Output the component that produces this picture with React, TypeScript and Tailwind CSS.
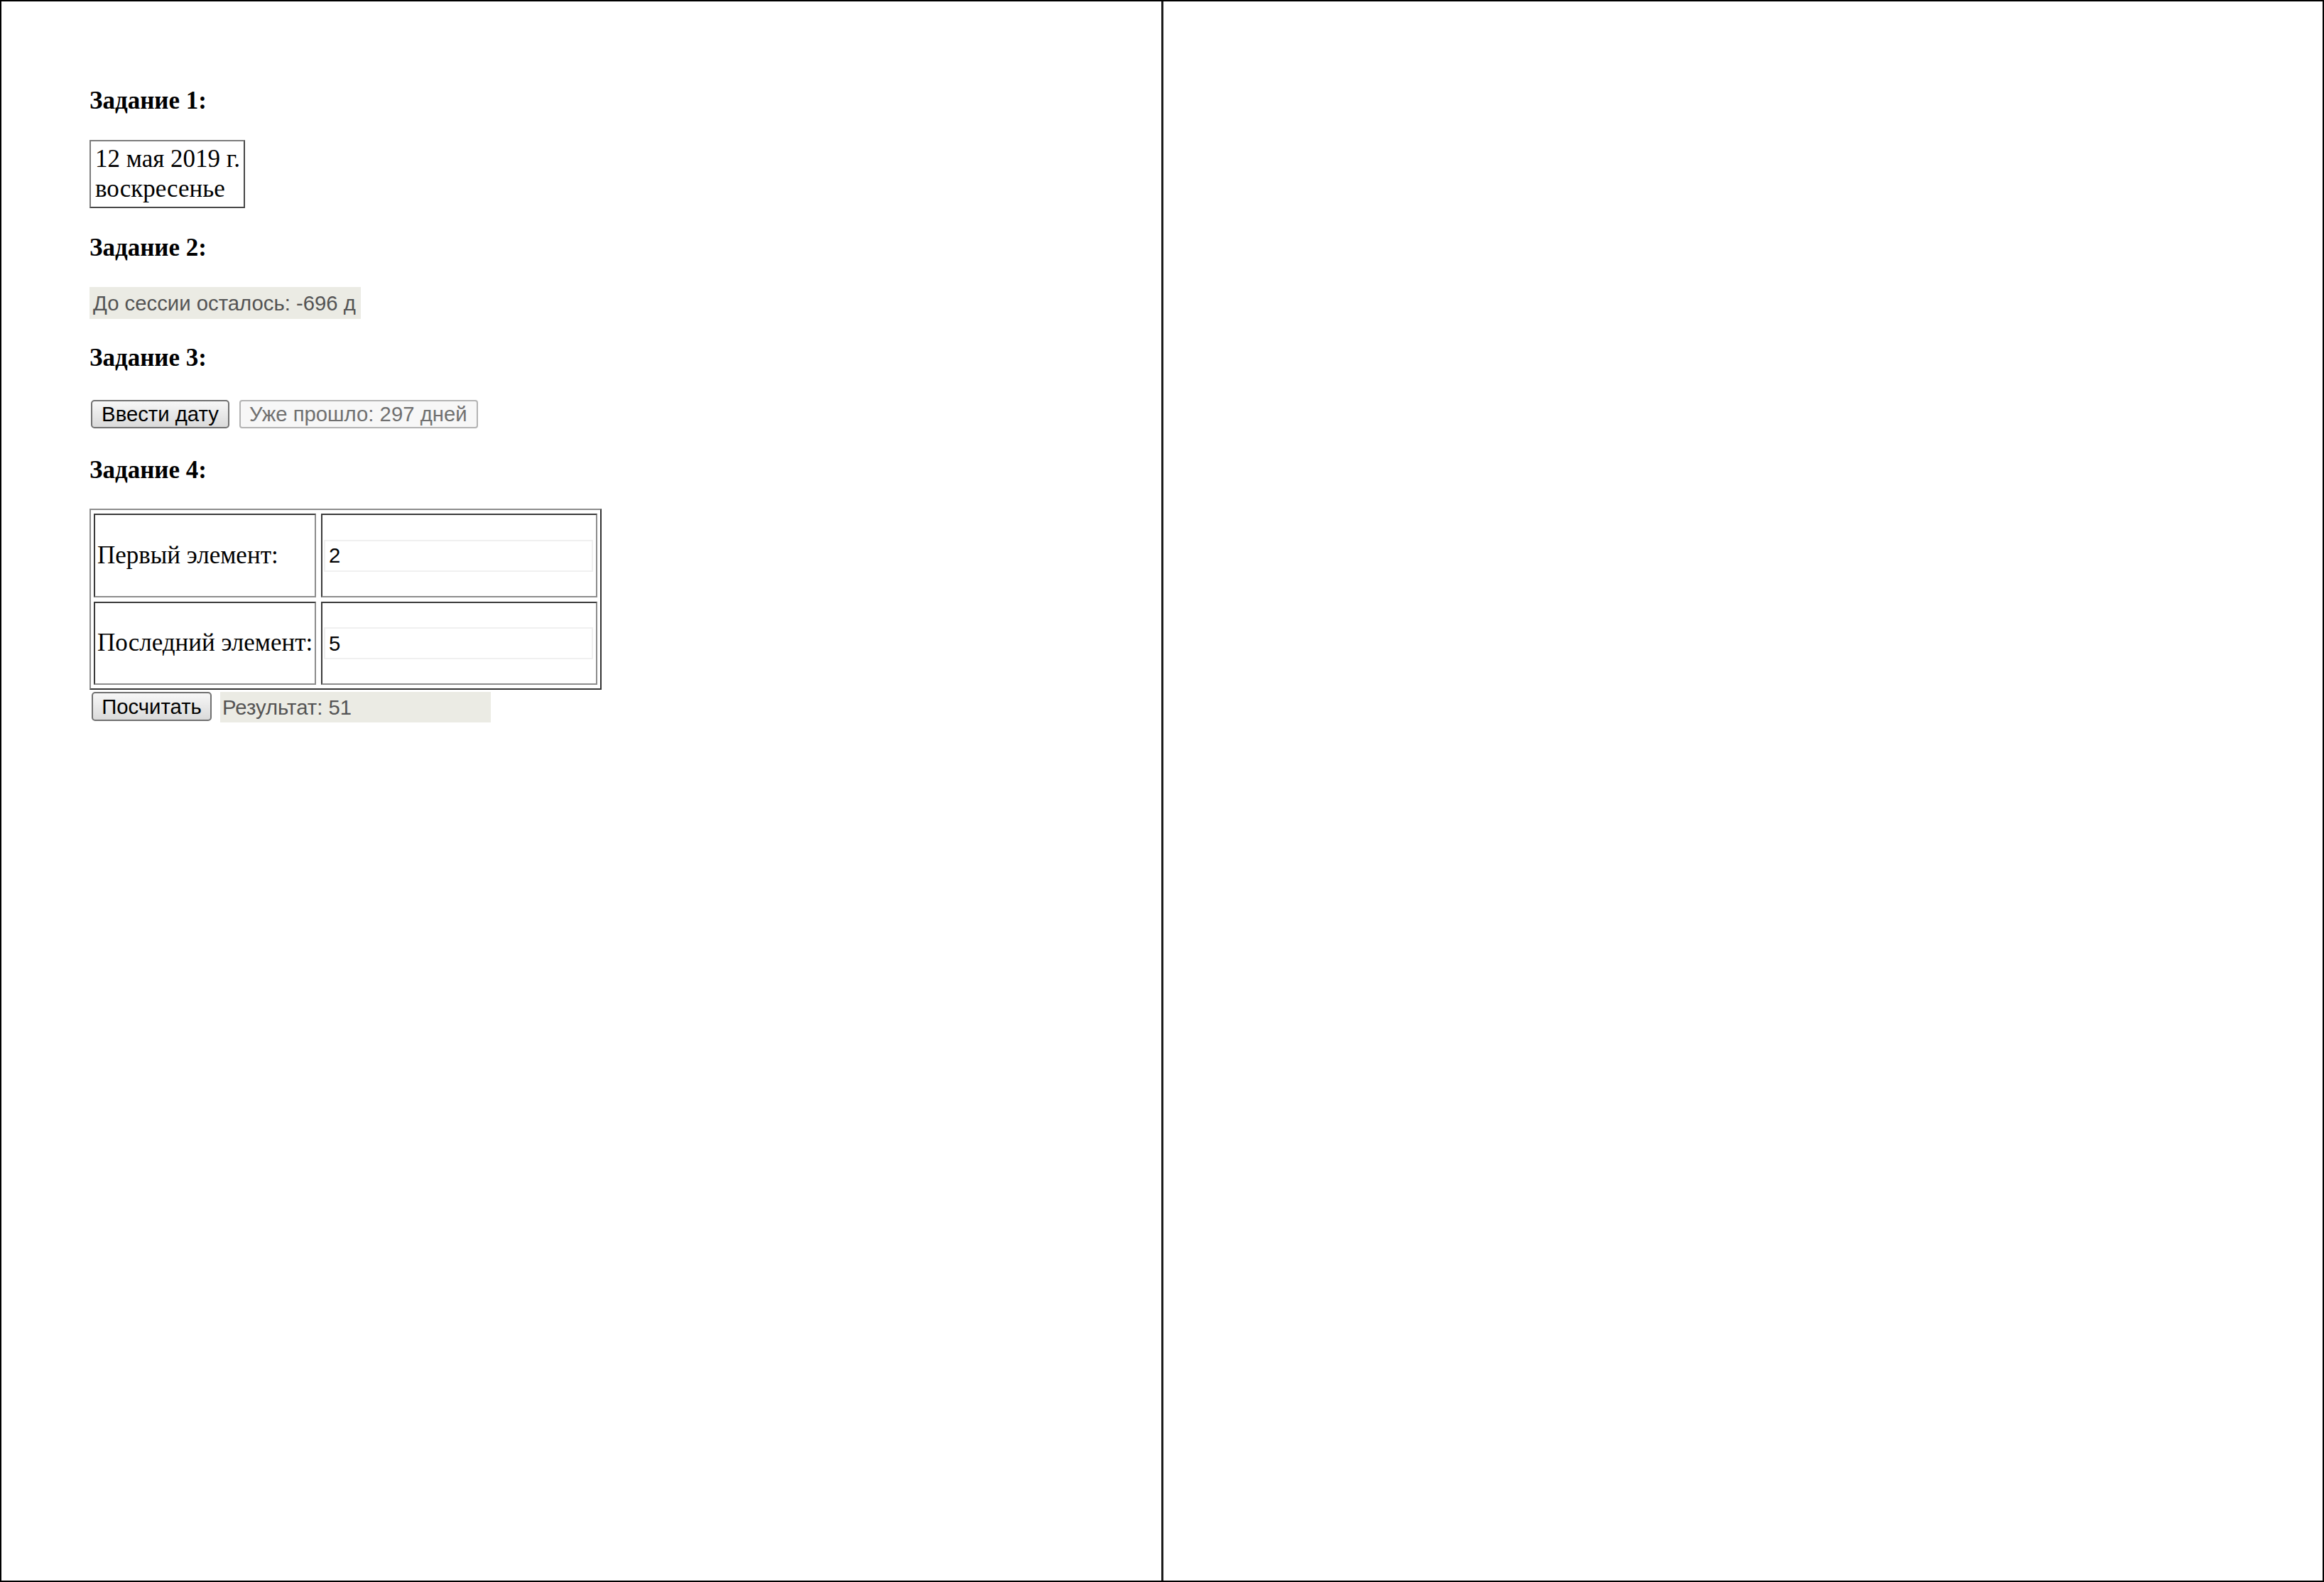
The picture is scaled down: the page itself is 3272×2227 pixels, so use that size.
const serif = "font-['Liberation_Serif','Times_New_Roman',serif]";
const sans = "font-['Liberation_Sans',Arial,sans-serif]";

const Heading = ({ children, className = "" }: { children: string; className?: string }) => (
  <p className={`${serif} text-[35px] leading-[39px] font-bold text-black ${className}`}>{children}</p>
);

const cell =
  "flex items-center border-2 border-t-[#3a3a3a] border-l-[#3a3a3a] border-r-[#8c8c8c] border-b-[#8c8c8c]";

const ClassicButton = ({ label, className = "" }: { label: string; className?: string }) => (
  <button
    className={`${sans} flex items-center justify-center rounded-[5px] border-2 border-[#707070] bg-linear-to-b from-[#f7f7f7] to-[#dadada] text-[29.3px] text-black ${className}`}
  >
    {label}
  </button>
);

export default function App() {
  return (
    <div className="flex h-[2227px] w-[3272px] border-2 border-black bg-white">
      <div className="w-[1636px] shrink-0 border-r-[3px] border-[#1c1c1c] pt-[120px] pl-[124px]">
        <Heading>Задание 1:</Heading>
        <div
          className={`${serif} mt-[36px] w-[219px] border-2 border-[#7c7c7c] border-r-[#474747] border-b-[#474747] px-[6px] py-[4px] text-[35px] leading-[42px] whitespace-nowrap text-black`}
        >
          <div>12 мая 2019 г.</div>
          <div>воскресенье</div>
        </div>

        <Heading className="mt-[36px]">Задание 2:</Heading>
        <div className={`${sans} mt-[36px] flex h-[45px] w-[382px] items-center bg-[#ebebe4] pl-[5px] text-[29.3px] whitespace-nowrap text-[#545454]`}>
          До сессии осталось: -696 д
        </div>

        <Heading className="mt-[35px]">Задание 3:</Heading>
        <div className="mt-[40px] ml-[2px] flex items-center gap-[14px]">
          <ClassicButton label="Ввести дату" className="h-[40px] w-[195px]" />
          <div
            className={`${sans} flex h-[40px] w-[336px] items-center rounded-[4px] border-2 border-[#b3b3b3] bg-[#f7f7f7] pl-[12px] text-[29.3px] whitespace-nowrap text-[#707070]`}
          >
            Уже прошло: 297 дней
          </div>
        </div>

        <Heading className="mt-[39px]">Задание 4:</Heading>
        <div className="mt-[35px] w-[721px] border-2 border-[#8c8c8c] border-r-[#333333] border-b-[#333333] px-[4px] py-[5px]">
          <div className="grid grid-cols-[313px_389px] grid-rows-[118px_117px] gap-x-[7px] gap-y-[6px]">
            <div className={`${cell} ${serif} pl-[3px] text-[35px] whitespace-nowrap text-black`}>Первый элемент:</div>
            <div className={cell}>
              <div className={`${sans} ml-[2px] flex h-[45px] w-[379px] items-center border-2 border-[#f0f0f0] pl-[5px] text-[29.3px] text-black`}>
                2
              </div>
            </div>
            <div className={`${cell} ${serif} pl-[3px] text-[35px] whitespace-nowrap text-black`}>Последний элемент:</div>
            <div className={cell}>
              <div className={`${sans} ml-[2px] flex h-[45px] w-[379px] items-center border-2 border-[#f0f0f0] pl-[5px] text-[29.3px] text-black`}>
                5
              </div>
            </div>
          </div>
        </div>
        <div className="mt-[3px] flex items-start gap-[12px]">
          <ClassicButton label="Посчитать" className="ml-[3px] h-[41px] w-[169px]" />
          <div className={`${sans} flex h-[43px] w-[381px] items-center bg-[#ebebe4] pl-[3px] text-[29.3px] whitespace-nowrap text-[#545454]`}>
            Результат: 51
          </div>
        </div>
      </div>
      <div className="flex-1" />
    </div>
  );
}
